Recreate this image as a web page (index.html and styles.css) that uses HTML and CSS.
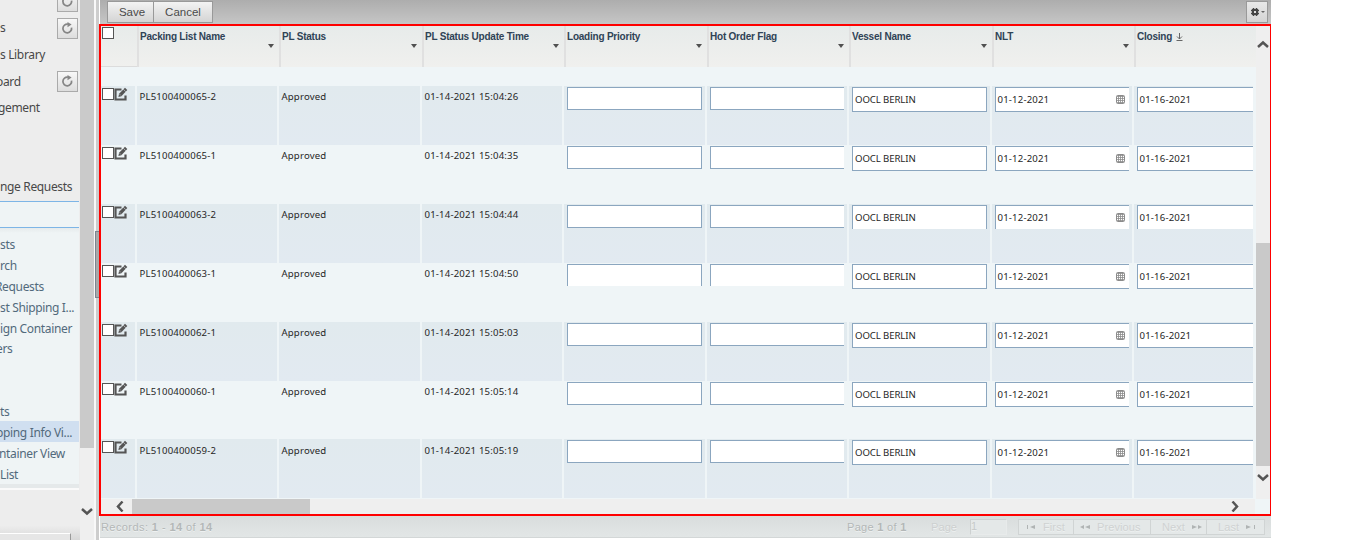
FILE: index.html
```html
<!DOCTYPE html>
<html lang="en">
<head>
<meta charset="utf-8">
<title>Shipping Info View</title>
<link rel="stylesheet" href="styles.css">
</head>
<body>
<svg class="defs" width="0" height="0">
  <symbol id="edit" viewBox="0 0 14 14"><path d="M7.500 2.500H1.500v10h10V8.500" fill="none" stroke="#555" stroke-width="2.200"/><path d="M4.400 10l.7-3.200L11 .8l2.300 2.300L7.400 9.200z" fill="#555"/><path d="M9.300 2.200l2.600 2.600M5.600 7.200l1.200 1.200" stroke="#e7edf0" stroke-width=".6"/></symbol>
  <symbol id="cal" viewBox="0 0 9 9"><rect x=".5" y=".5" width="8" height="8" rx="1" fill="#fff" stroke="#8b8b8b"/><path d="M1 1.5h7M1 3.5h7M1 5.5h7M1 7.5h7M2.5 1v7M4.5 1v7M6.5 1v7" stroke="#8b8b8b" stroke-width=".8"/></symbol>
  <symbol id="reload" viewBox="0 0 12 12"><path d="M9.7 5.2A4 4 0 1 1 6.4 2" fill="none" stroke="#858585" stroke-width="1.6"/><path d="M6 0l3.8 2.2L6 4.8z" fill="#858585"/></symbol>
  <symbol id="chev" viewBox="0 0 12 8"><path d="M1 6.5L6 2l5 4.5" fill="none" stroke="#555" stroke-width="2.5"/></symbol>
</svg>
<div class="app">
  <nav class="side">
    <div class="top-menu">
      <div class="m m0"><button class="rl"><svg><use href="#reload"/></svg></button></div>
      <div class="m"><span>s</span><button class="rl"><svg><use href="#reload"/></svg></button></div>
      <div class="m"><span>s Library</span></div>
      <div class="m"><span class="board">oard</span><button class="rl"><svg><use href="#reload"/></svg></button></div>
      <div class="m"><span class="gem">gement</span></div>
      <div class="m last"><span>nge Requests</span></div>
    </div>
    <div class="band"></div>
    <div class="sub-menu">
      <div class="s">sts</div>
      <div class="s">rch</div>
      <div class="s"><span class="req">Requests</span></div>
      <div class="s">st Shipping I...</div>
      <div class="s">ign Container</div>
      <div class="s"><span class="ers">ers</span></div>
      <div class="s"></div>
      <div class="s"></div>
      <div class="s">ts</div>
      <div class="s sel"><span class="ping">pping Info Vi...</span></div>
      <div class="s"><span class="nt">ntainer View</span></div>
      <div class="s">List</div>
    </div>
    <div class="side-end"></div>
    <div class="side-foot"><i></i></div>
  </nav>
  <div class="side-scroll"><div class="thumb"></div><svg class="down"><use href="#chev"/></svg></div>
  <div class="split"><div class="grip"></div></div>
  <main>
    <div class="toolbar">
      <div class="btns"><button>Save</button><button>Cancel</button></div>
      <button class="gear"><svg width="17" height="12" viewBox="0 0 17 12"><g stroke="#444" stroke-width="1.500"><path d="M4.500 2v8M7.500 2v8M2 4.500h8M2 7.500h8"/></g><rect x="3" y="3" width="6" height="6" fill="#444"/><rect x="5" y="5" width="2" height="2" fill="#ddd"/><path d="M12 5h4l-2 2z" fill="#666"/></svg></button>
    </div>
    <section class="grid">
      <div class="upper">
        <div class="view">
          <div class="cols head">
            <div class="h0"><i class="cb"></i></div>
            <div>Packing List Name<i class="dd"></i></div>
            <div>PL Status<i class="dd"></i></div>
            <div>PL Status Update Time<i class="dd"></i></div>
            <div>Loading Priority<i class="dd"></i></div>
            <div>Hot Order Flag<i class="dd"></i></div>
            <div>Vessel Name<i class="dd"></i></div>
            <div>NLT<i class="dd"></i></div>
            <div>Closing<svg class="sort" viewBox="0 0 7 9"><path d="M3.500 0v6M1 3.500l2.500 2.500L6 3.500M.5 7.500h6" fill="none" stroke="#666"/></svg></div>
          </div>
          <div class="cols row odd">
            <div><i class="cb"></i><svg class="ed"><use href="#edit"/></svg></div><div class="t">PL5100400065-2</div><div class="t">Approved</div><div class="t">01-14-2021 15:04:26</div>
            <div><p class="in e"></p></div><div><p class="in e cut"></p></div><div><p class="in v">OOCL BERLIN</p></div><div><p class="in cut">01-12-2021<svg><use href="#cal"/></svg></p></div><div><p class="in cut">01-16-2021</p></div>
          </div>
          <div class="cols row">
            <div><i class="cb"></i><svg class="ed"><use href="#edit"/></svg></div><div class="t">PL5100400065-1</div><div class="t">Approved</div><div class="t">01-14-2021 15:04:35</div>
            <div><p class="in e"></p></div><div><p class="in e cut"></p></div><div><p class="in v">OOCL BERLIN</p></div><div><p class="in cut">01-12-2021<svg><use href="#cal"/></svg></p></div><div><p class="in cut">01-16-2021</p></div>
          </div>
          <div class="cols row odd">
            <div><i class="cb"></i><svg class="ed"><use href="#edit"/></svg></div><div class="t">PL5100400063-2</div><div class="t">Approved</div><div class="t">01-14-2021 15:04:44</div>
            <div><p class="in e"></p></div><div><p class="in e cut"></p></div><div><p class="in v open">OOCL BERLIN</p></div><div><p class="in cut open">01-12-2021<svg><use href="#cal"/></svg></p></div><div><p class="in cut open">01-16-2021</p></div>
          </div>
          <div class="cols row">
            <div><i class="cb"></i><svg class="ed"><use href="#edit"/></svg></div><div class="t">PL5100400063-1</div><div class="t">Approved</div><div class="t">01-14-2021 15:04:50</div>
            <div><p class="in e open"></p></div><div><p class="in e cut open"></p></div><div><p class="in v">OOCL BERLIN</p></div><div><p class="in cut">01-12-2021<svg><use href="#cal"/></svg></p></div><div><p class="in cut">01-16-2021</p></div>
          </div>
          <div class="cols row odd">
            <div><i class="cb"></i><svg class="ed"><use href="#edit"/></svg></div><div class="t">PL5100400062-1</div><div class="t">Approved</div><div class="t">01-14-2021 15:05:03</div>
            <div><p class="in e"></p></div><div><p class="in e cut"></p></div><div><p class="in v">OOCL BERLIN</p></div><div><p class="in cut">01-12-2021<svg><use href="#cal"/></svg></p></div><div><p class="in cut">01-16-2021</p></div>
          </div>
          <div class="cols row short">
            <div><i class="cb"></i><svg class="ed"><use href="#edit"/></svg></div><div class="t">PL5100400060-1</div><div class="t">Approved</div><div class="t">01-14-2021 15:05:14</div>
            <div><p class="in e"></p></div><div><p class="in e cut"></p></div><div><p class="in v">OOCL BERLIN</p></div><div><p class="in cut">01-12-2021<svg><use href="#cal"/></svg></p></div><div><p class="in cut">01-16-2021</p></div>
          </div>
          <div class="cols row odd end">
            <div><i class="cb"></i><svg class="ed"><use href="#edit"/></svg></div><div class="t">PL5100400059-2</div><div class="t">Approved</div><div class="t">01-14-2021 15:05:19</div>
            <div><p class="in e"></p></div><div><p class="in e cut"></p></div><div><p class="in v">OOCL BERLIN</p></div><div><p class="in cut">01-12-2021<svg><use href="#cal"/></svg></p></div><div><p class="in cut">01-16-2021</p></div>
          </div>
        </div>
        <div class="vscroll"><svg><use href="#chev"/></svg><div class="thumb"></div><svg class="down"><use href="#chev"/></svg></div>
      </div>
      <div class="hscroll"><svg class="left"><use href="#chev"/></svg><div class="thumb"></div><svg class="right"><use href="#chev"/></svg></div>
    </section>
    <footer>
      <div class="rec">Records: <b>1</b> - <b>14</b> of <b>14</b></div>
      <div class="pg">Page <b>1</b> of <b>1</b></div>
      <div class="pl">Page</div>
      <div class="pi">1</div>
      <div class="nav">
        <span class="n1"><svg viewBox="0 0 10 6"><path d="M1 1h1v4H1zM9 1v4L4 3z"/></svg>First</span>
        <span class="n2"><svg viewBox="0 0 10 6"><path d="M4 1v4L0 3zM10 1v4L5 3z"/></svg>Previous</span>
        <span class="n3">Next<svg viewBox="0 0 10 6"><path d="M0 1v4l5-2zM6 1v4l4-2z"/></svg></span>
        <span class="n4">Last<svg viewBox="0 0 10 6"><path d="M0 1v4l5-2zM8 1h1v4H8z"/></svg></span>
      </div>
    </footer>
  </main>
</div>
</body>
</html>
```
FILE: styles.css
```css
* { box-sizing: border-box; }
body { margin: 0; background: #fff; overflow: hidden; }
.defs { display: block; }
p { margin: 0; }
i { display: block; }
svg { display: block; }
button { font: inherit; margin: 0; padding: 0; }

.app { display: flex; width: 1271px; height: 540px; overflow: hidden; }

/* sidebar */
.side { width: 80px; height: 540px; flex: none; overflow: hidden; display: flex; flex-direction: column; background: #ededed; font: 12px/20px "Noto Sans", sans-serif; color: #484848; white-space: nowrap; letter-spacing: -.35px; }
.top-menu { height: 201px; width: 79px; flex: none; }
.m { height: 26.700px; display: flex; align-items: center; }
.m.m0 { height: 15px; align-items: flex-end; padding-bottom: 3px; }
.m.last { margin-top: 52px; }
.rl { margin-left: auto; margin-right: 1px; width: 21px; height: 21px; flex: none; border: 1px solid #aaa; background: linear-gradient(#f8f8f8, #ddd); display: flex; align-items: center; justify-content: center; }
.rl svg { width: 13px; height: 13px; }
.board { margin-left: -4px; }
.gem { margin-left: -2px; }
.band { height: 27px; width: 79px; flex: none; border-top: 1px solid #7db5e6; border-bottom: 1px solid #7db5e6; background: #eff4f5; }
.sub-menu { height: 256px; width: 79px; flex: none; padding-top: 5px; background: linear-gradient(#e6ebec, #eff4f5 5px); color: #526a7c; }
.s { height: 20.900px; line-height: 24px; overflow: hidden; }
.s span { display: inline-block; }
.req { margin-left: -5px; }
.ers { margin-left: -4px; }
.ping { margin-left: -4px; }
.nt { margin-left: -1px; }
.sel { background: #d0dff0; }
.side-end { height: 6px; width: 79px; flex: none; background: #e5e9ea; border-bottom: 2px solid #fafafa; }
.side-foot { flex: 1; background: linear-gradient(#ededed 70%, #d6d6d6); padding-top: 43px; }
.side-foot i { width: 71px; height: 8px; background: #e6e6e6; border-top: 1px solid #fff; border-right: 1px solid #999; }
.side-scroll { width: 14px; flex: none; background: #efefef; }
.side-scroll .thumb { height: 448px; background: #cacaca; }
.side-scroll .down { margin: 59px 0 0 1px; width: 12px; height: 9px; }
.down { transform: rotate(180deg); }
.split { width: 5px; flex: none; border-left: 2px solid #f8f8f8; background: #cdcdcd; padding-top: 231px; }
.grip { margin-left: -1px; width: 4px; height: 67px; background: #aaa; border: 1px solid #7d8590; border-right: 0; }

/* toolbar */
main { width: 1172px; flex: none; }
.toolbar { height: 24px; margin-left: 1px; padding: 1px 3px 0 7px; background: linear-gradient(#adadad, #c6c6c6); display: flex; justify-content: space-between; font: 11px/18px "Liberation Sans", Arial, sans-serif; color: #4a4a4a; }
.btns { display: flex; height: 22px; }
.btns button { border: 1px solid #999; background: linear-gradient(#f3f3f3, #d4d4d4); color: #4a4a4a; width: 47px; font-size: 11.500px; padding-left: 3px; }
.btns button + button { width: 60px; margin-left: -1px; padding-left: 0; }
.gear { width: 22px; height: 22px; border: 1px solid #999; background: linear-gradient(#e8e8e8, #d4d4d4); display: flex; align-items: center; justify-content: center; }

/* grid */
.grid { height: 492px; border: 2px solid #f00; border-right-width: 1px; background: #eff5f7; }
.upper { display: flex; height: 473px; }
.view { width: 1155px; flex: none; overflow: hidden; }
.cols { display: grid; grid-template-columns: 34px 140px 141px 140px 141px 140px 141px 140px 119px; column-gap: 2px; }
.head { height: 41px; margin-bottom: 19px; grid-template-columns: 36px 142px 143px 142px 143px 142px 143px 142px 121px; column-gap: 0; background: linear-gradient(#e7ebea, #f0f0ee); font: bold 10px/12px "Liberation Sans", Arial, sans-serif; color: #2f4356; }
.head > div { padding: 5px 0 0 1px; border-left: 2px solid #e0e0e0; white-space: nowrap; position: relative; letter-spacing: -.22px; }
.head > .h0 { padding: 1px; border-left: 0; border-bottom: 1px solid #dcdcdc; }
.cb { width: 12px; height: 12px; border: 1px solid #555; background: #fff; flex: none; }
.head .dd { position: absolute; right: 5px; top: 18px; border: 3.500px solid transparent; border-top: 4px solid #505050; border-bottom: 0; }
.sort { position: absolute; left: 40px; top: 7px; width: 7px; height: 9px; }
.row { height: 59px; font: 9.600px/13px "Noto Sans", sans-serif; letter-spacing: .17px; color: #262626; }
.row.short { height: 58px; }
.row.odd > div { background: linear-gradient(#e1eaee, #e2eaf1); }
.row > div { display: flex; align-items: flex-start; white-space: nowrap; padding: 1px 3px 0; overflow: hidden; }
.row > div:first-child { padding: 1px 0 0 1px; }
.row .cb { margin-top: 1px; }
.ed { width: 14px; height: 14px; }
.row > .t { padding: 4px 0 0 2.500px; }
.row.end > .t { padding-top: 5px; }
.in { width: 135px; height: 25px; flex: none; border: 1px solid #8ba6bf; background: #fff; padding: 0 2px 0 1.500px; display: flex; align-items: center; }
.in.v { letter-spacing: -.1px; padding-left: 2px; }
.in.e { height: 23px; }
.in.cut { border-right: 0; width: 134px; }
.in.open { border-bottom: 0; height: 24px; }
.in.e.open { height: 22px; }
.in svg { width: 9px; height: 9px; margin: 0 2px 0 auto; }
.vscroll { width: 14px; background: #efefef; margin-left: auto; padding: 14px 1px 0; }
.vscroll svg { width: 12px; height: 9px; }
.vscroll .thumb { margin: 194px -1px 0; height: 223px; background: #c9c9c9; }
.vscroll .down { margin-top: 7px; }
.hscroll { width: 1154px; height: 15px; background: #efefef; display: flex; align-items: center; }
.hscroll svg { width: 12px; height: 9px; }
.left { transform: rotate(-90deg); margin-left: 13px; }
.hscroll .thumb { width: 178px; height: 15px; margin-left: 6px; background: #c9c9c9; }
.right { transform: rotate(90deg); margin-left: auto; margin-right: 14px; }

/* pager */
footer { margin-left: 1px; height: 22px; background: linear-gradient(#d9dddd, #e2e6e6); border-bottom: 1px solid #d3d7d7; display: flex; align-items: center; font: 11px/13px "Liberation Sans", Arial, sans-serif; letter-spacing: .1px; color: #b3b7b7; white-space: nowrap; text-shadow: 0 1px #eef1f1; padding-top: 1px; }
.rec { width: 747px; padding-left: 1px; letter-spacing: .42px; }
.pg { width: 84px; letter-spacing: .3px; }
.pl { width: 39px; color: #cdd0d0; }
.pi { width: 37px; height: 16px; border: 1px solid #cdd1d1; border-right-color: #e8ebeb; border-bottom-color: #e8ebeb; background: #e4e8e8; color: #c6c9c9; }
.nav { display: flex; margin-left: 11px; height: 16px; border: 1px solid #d0d4d4; background: #e4e8e8; color: #cfd2d2; }
.nav span { display: flex; align-items: center; border-right: 1px solid #d0d4d4; gap: 7px; }
.nav span:last-child { border: 0; }
.nav svg { width: 10px; height: 6px; fill: #b0b4b4; }
.n1 { width: 55px; padding-left: 7px; }
.n2 { width: 77px; padding-left: 6px; }
.n3 { width: 56px; padding-left: 11px; }
.n4 { width: 57px; padding-left: 11px; }
```
